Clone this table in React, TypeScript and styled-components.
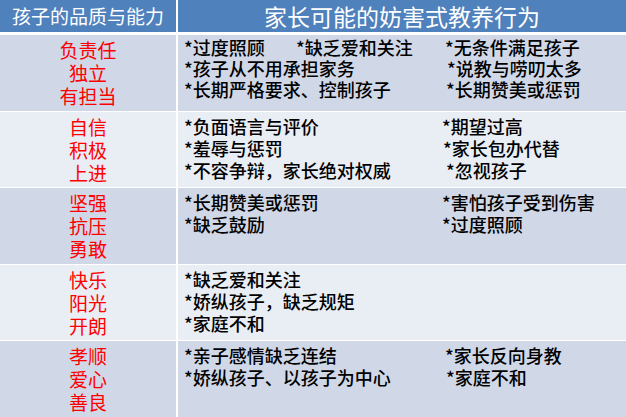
import React from 'react';
import styled, { createGlobalStyle } from 'styled-components';

type Item = {
  text: string;
  span?: number;
  shift?: number;
};

type Row = {
  traits: string[];
  columns: string;
  tight?: boolean;
  lines: Item[][];
};

const GlobalStyle = createGlobalStyle`
  html, body {
    margin: 0;
    padding: 0;
    background: #fff;
  }
  body {
    font-family: "Noto Sans CJK SC", "Liberation Sans", sans-serif;
  }
`;

const Table = styled.div`
  width: 626px;
  height: 417px;
  display: flex;
  flex-direction: column;
  gap: 1px;
  background: #fff;
  overflow: hidden;
`;

const HeaderRow = styled.div`
  height: 32px;
  margin-bottom: 2px;
  display: grid;
  grid-template-columns: 176px 1fr;
  column-gap: 2px;
  flex-shrink: 0;
`;

const HeaderCell = styled.div<{ $size: number }>`
  background: #4f81bd;
  color: #fff;
  font-size: ${(p) => p.$size}px;
  line-height: 32px;
  text-align: center;
  white-space: nowrap;
`;

const BodyRow = styled.div<{ $even: boolean }>`
  flex: 1;
  display: grid;
  grid-template-columns: 176px 1fr;
  column-gap: 2px;
  background: #fff;

  & > div {
    background: ${(p) => (p.$even ? '#e9edf4' : '#d0d8e8')};
  }
`;

const TraitCell = styled.div`
  display: flex;
  flex-direction: column;
  align-items: center;
  padding-top: 3px;
  color: #ff0000;
  font-size: 19px;
  line-height: 23px;
`;

const BehaviourCell = styled.div<{ $tight: boolean }>`
  padding: ${(p) => (p.$tight ? '2px' : '3px')} 0 0 6px;
  color: #000;
  font-size: 18px;
  font-weight: 500;
  line-height: ${(p) => (p.$tight ? '21px' : '22px')};
`;

const Line = styled.div<{ $columns: string }>`
  display: grid;
  grid-template-columns: ${(p) => p.$columns};
  white-space: nowrap;
`;

const Entry = styled.span<{ $span: number; $shift: number }>`
  grid-column: span ${(p) => p.$span};
  padding-left: ${(p) => p.$shift}px;
`;

const rows: Row[] = [
  {
    traits: ['负责任', '独立', '有担当'],
    columns: '112px 149px 1fr',
    tight: true,
    lines: [
      [{ text: '*过度照顾' }, { text: '*缺乏爱和关注' }, { text: '*无条件满足孩子' }],
      [{ text: '*孩子从不用承担家务', span: 2 }, { text: '*说教与唠叨太多', shift: 2 }],
      [{ text: '*长期严格要求、控制孩子', span: 2 }, { text: '*长期赞美或惩罚', shift: 1 }],
    ],
  },
  {
    traits: ['自信', '积极', '上进'],
    columns: '258px 1fr',
    lines: [
      [{ text: '*负面语言与评价' }, { text: '*期望过高' }],
      [{ text: '*羞辱与惩罚' }, { text: '*家长包办代替', shift: 1 }],
      [{ text: '*不容争辩，家长绝对权威' }, { text: '*忽视孩子', shift: 4 }],
    ],
  },
  {
    traits: ['坚强', '抗压', '勇敢'],
    columns: '258px 1fr',
    lines: [
      [{ text: '*长期赞美或惩罚' }, { text: '*害怕孩子受到伤害' }],
      [{ text: '*缺乏鼓励' }, { text: '*过度照顾' }],
    ],
  },
  {
    traits: ['快乐', '阳光', '开朗'],
    columns: '1fr',
    lines: [
      [{ text: '*缺乏爱和关注' }],
      [{ text: '*娇纵孩子，缺乏规矩' }],
      [{ text: '*家庭不和' }],
    ],
  },
  {
    traits: ['孝顺', '爱心', '善良'],
    columns: '261px 1fr',
    lines: [
      [{ text: '*亲子感情缺乏连结' }, { text: '*家长反向身教' }],
      [{ text: '*娇纵孩子、以孩子为中心' }, { text: '*家庭不和', shift: 1 }],
    ],
  },
];

const App: React.FC = () => {
  return (
    <>
      <GlobalStyle />
      <Table>
        <HeaderRow>
          <HeaderCell $size={19}>孩子的品质与能力</HeaderCell>
          <HeaderCell $size={23}>家长可能的妨害式教养行为</HeaderCell>
        </HeaderRow>
        {rows.map((row, i) => (
          <BodyRow $even={i % 2 === 1} key={i}>
            <TraitCell>
              {row.traits.map((t) => (
                <span key={t}>{t}</span>
              ))}
            </TraitCell>
            <BehaviourCell $tight={!!row.tight}>
              {row.lines.map((line, j) => (
                <Line $columns={row.columns} key={j}>
                  {line.map((item) => (
                    <Entry $span={item.span ?? 1} $shift={item.shift ?? 0} key={item.text}>
                      {item.text}
                    </Entry>
                  ))}
                </Line>
              ))}
            </BehaviourCell>
          </BodyRow>
        ))}
      </Table>
    </>
  );
};

export default App;
